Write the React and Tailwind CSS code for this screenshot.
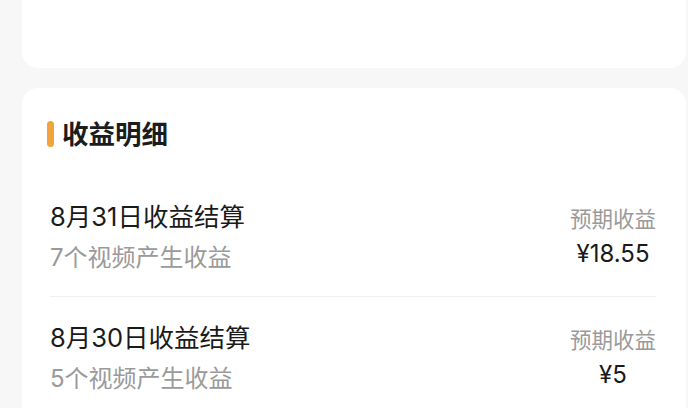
import React from 'react';

const rows = [
  { id: 1, date: '8月31日收益结算', count: '7个视频产生收益', amount: '¥18.55' },
  { id: 2, date: '8月30日收益结算', count: '5个视频产生收益', amount: '¥5' },
];

const App = () => {
  return (
    <div
      className="w-[688px] h-[408px] overflow-hidden bg-[#f7f7f7] pl-[22px] pr-[2px]"
      style={{ fontFamily: 'Inter, "Noto Sans CJK SC", "Noto Sans", sans-serif' }}
    >
      {/* top card (cut off) */}
      <div className="h-[68px] bg-white rounded-b-[16px]" />

      {/* income detail card */}
      <div className="mt-[20px] bg-white rounded-t-[16px] pl-[28px] pr-[30px] pt-[32px] pb-6">
        <div className="flex items-center h-[28px]">
          <span className="w-[7px] h-[26px] rounded-full bg-[#f2a43c] -ml-[3px]" />
          <h3 className="ml-[8px] text-[26.5px] leading-[28px] font-bold text-[#1c1c1c]">收益明细</h3>
        </div>

        <div className="mt-[26px]">
          {rows.map((row, i) => (
            <div
              key={row.id}
              className={`flex justify-between ${i === 0 ? 'pt-[26px] pb-[23px] border-b border-[#efefef]' : 'pt-[24px]'}`}
            >
              <div>
                <p className="text-[25.5px] leading-[34px] text-[#1a1a1a]">{row.date}</p>
                <p className="mt-[9px] text-[24px] leading-[30px] text-[#9a9a9a]">{row.count}</p>
              </div>
              <div className="mt-[5px] flex flex-col items-center">
                <span className="text-[21.5px] leading-[28px] text-[#9a9a9a]">预期收益</span>
                <span className="mt-[5px] text-[24px] leading-[32px] text-[#1a1a1a]">{row.amount}</span>
              </div>
            </div>
          ))}
        </div>
      </div>
    </div>
  );
};

export default App;
